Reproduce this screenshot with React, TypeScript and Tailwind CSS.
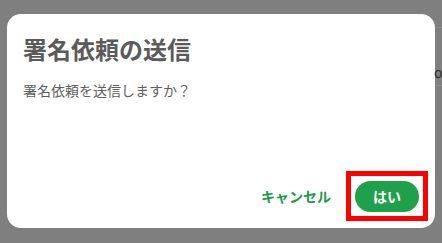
import React from "react";

export default function App() {
  return (
    <div
      className="relative w-[442px] h-[243px] overflow-hidden bg-[#7f7f7f] flex pl-[7px] pt-[14px]"
      style={{ fontFamily: '"Noto Sans CJK JP", "Noto Sans", sans-serif' }}
    >
      <div className="w-[428px] h-[214px] bg-white rounded-[14px] flex flex-col p-4 shrink-0">
        <h2 className="text-[24px] leading-[32px] font-bold text-[#5b5b5b] mt-[3px]">署名依頼の送信</h2>
        <p className="text-[14px] leading-[20px] text-[#5f5f5f] mt-[15px]">署名依頼を送信しますか？</p>
        <div className="mt-auto flex items-center justify-end gap-[16px]">
          <button className="h-[32px] px-[8px] text-[14px] font-bold text-[#1c9a48]">キャンセル</button>
          <div className="relative">
            <button className="h-[31px] w-[64px] rounded-full bg-[#1fa04b] text-white text-[14px] font-bold">はい</button>
            <div className="absolute -left-[9px] -right-[9px] -top-[10px] -bottom-[9px] border-[5px] border-[#ff0000]" />
          </div>
        </div>
      </div>

      {/* background page hints on the right */}
      <div className="flex flex-col w-[7px] shrink-0 pt-[13px]">
        <div className="h-px bg-[#8c8c8c]" />
        <div className="text-[14px] leading-[20px] text-[#2e2e2e] mt-[34px] -ml-[1px]">o</div>
        <div className="h-px bg-[#8c8c8c] mt-[3px]" />
      </div>
    </div>
  );
}
